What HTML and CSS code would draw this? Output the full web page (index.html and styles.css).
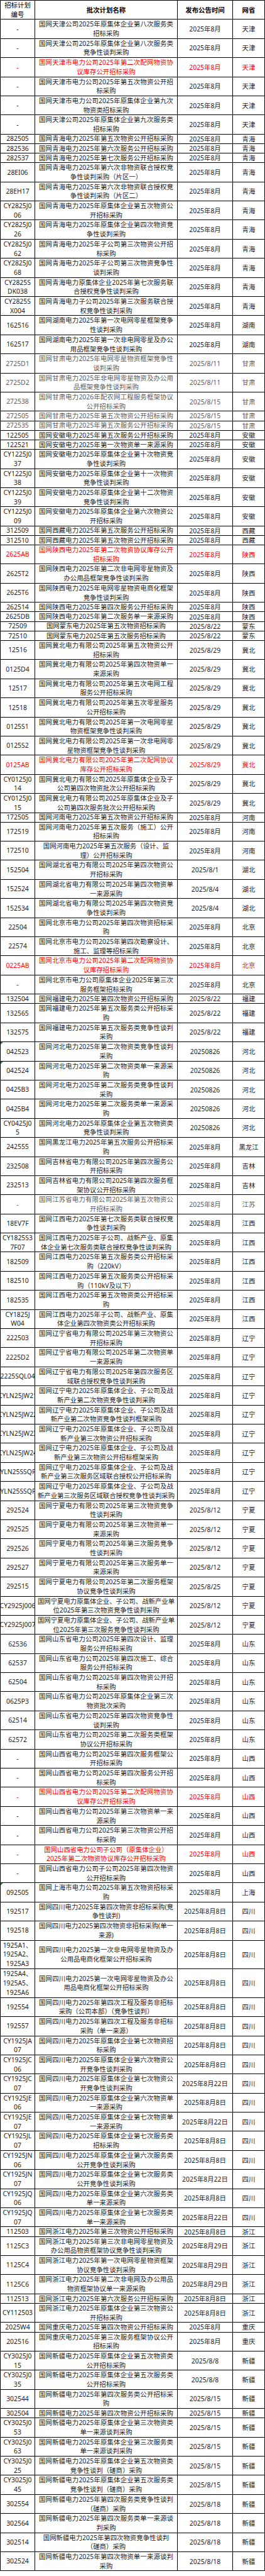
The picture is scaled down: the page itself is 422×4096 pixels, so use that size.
FILE: index.html
```html
<!DOCTYPE html>
<html lang="zh-CN">
<head>
<meta charset="utf-8">
<title>招标计划</title>
<link rel="stylesheet" href="styles.css">
</head>
<body>
<table class="sheet">
<colgroup><col class="c1"><col class="c2"><col class="c3"><col class="c4"></colgroup>
<thead>
<tr class="h2"><th class="nb"><div class="i"><span>招标计划</span><span>编号</span></div></th><th>批次计划名称</th><th>发布公告时间</th><th>网省</th></tr>
</thead>
<tbody>
<tr class="h2"><td><div class="i">-</div></td><td><div class="n"><span class="j">国网天津公司2025年原集体企业第八次服务类</span><span>招标采购</span></div></td><td>2025年8月</td><td>天津</td></tr>
<tr class="h2"><td><div class="i">-</div></td><td><div class="n"><span class="j">国网天津公司2025年原集体企业第八次服务类</span><span>竞争性谈判采购</span></div></td><td>2025年8月</td><td>天津</td></tr>
<tr class="h2 red"><td><div class="i">-</div></td><td><div class="n"><span class="j">国网天津市电力公司2025年第二次配网物资协</span><span>议库存公开招标采购</span></div></td><td>2025年8月</td><td>天津</td></tr>
<tr class="h2"><td><div class="i">-</div></td><td><div class="n"><span class="j">国网天津市电力公司2025年第五次物资公开招</span><span>标采购</span></div></td><td>2025年8月</td><td>天津</td></tr>
<tr class="h2"><td><div class="i">-</div></td><td><div class="n"><span class="j">国网天津市电力公司2025年原集体企业第九次</span><span>物资类招标采购</span></div></td><td>2025年8月</td><td>天津</td></tr>
<tr class="h2"><td><div class="i">-</div></td><td><div class="n"><span class="j">国网天津公司2025年原集体企业第九次服务类</span><span>招标采购</span></div></td><td>2025年8月</td><td>天津</td></tr>
<tr class="h1"><td><div class="i">282505</div></td><td><div class="n"><span class="j">国网青海电力2025年第五次物资公开招标采购</span></div></td><td>2025年8月</td><td>青海</td></tr>
<tr class="h1"><td><div class="i">282536</div></td><td><div class="n"><span class="j">国网青海电力2025年第六次服务公开招标采购</span></div></td><td>2025年8月</td><td>青海</td></tr>
<tr class="h1"><td><div class="i">282537</div></td><td><div class="n"><span class="j">国网青海电力2025年第七次服务公开招标采购</span></div></td><td>2025年8月</td><td>青海</td></tr>
<tr class="h2"><td><div class="i">28EI06</div></td><td><div class="n"><span class="j">国网青海电力2025年第六次非物资联合授权竞</span><span>争性谈判采购（片区一）</span></div></td><td>2025年8月</td><td>青海</td></tr>
<tr class="h2"><td><div class="i">28EH17</div></td><td><div class="n"><span class="j">国网青海电力2025年第六次非物资联合授权竞</span><span>争性谈判采购（片区二）</span></div></td><td>2025年8月</td><td>青海</td></tr>
<tr class="h2"><td><div class="i"><span>CY2825J0</span><span>06</span></div></td><td><div class="n"><span class="j">国网青海电力2025年原集体企业第五次物资公</span><span>开招标采购</span></div></td><td>2025年8月</td><td>青海</td></tr>
<tr class="h2"><td><div class="i"><span>CY2825J0</span><span>26</span></div></td><td><div class="n"><span class="j">国网青海电力2025年原集体企业第四次物资竞</span><span>争性谈判采购</span></div></td><td>2025年8月</td><td>青海</td></tr>
<tr class="h2"><td><div class="i"><span>CY2825J0</span><span>62</span></div></td><td><div class="n"><span class="j">国网青海电力2025年子公司第三次物资公开招</span><span>标采购</span></div></td><td>2025年8月</td><td>青海</td></tr>
<tr class="h2"><td><div class="i"><span>CY2825J0</span><span>68</span></div></td><td><div class="n"><span class="j">国网青海电力2025年子公司第三次物资竞争性</span><span>谈判采购</span></div></td><td>2025年8月</td><td>青海</td></tr>
<tr class="h2"><td><div class="i"><span>CY2825S</span><span>DK038</span></div></td><td><div class="n"><span class="j">国网青海电力原集体企业2025年第七次服务联</span><span>合授权竞争性谈判采购</span></div></td><td>2025年8月</td><td>青海</td></tr>
<tr class="h2"><td><div class="i"><span>CY2825S</span><span>X004</span></div></td><td><div class="n"><span class="j">国网青海电力子公司2025年第三次服务联合授</span><span>权竞争性谈判采购</span></div></td><td>2025年8月</td><td>青海</td></tr>
<tr class="h2"><td><div class="i">162516</div></td><td><div class="n"><span class="j">国网湖南电力2025年第一次电网零星框架竞争</span><span>性谈判采购</span></div></td><td>2025年8月</td><td>湖南</td></tr>
<tr class="h2"><td><div class="i">162517</div></td><td><div class="n"><span class="j">国网湖南电力2025年第一次非电网零星及办公</span><span>用品框架竞争性谈判采购</span></div></td><td>2025年8月</td><td>湖南</td></tr>
<tr class="h2 gray"><td><div class="i">2725D1</div></td><td><div class="n"><span class="j">国网甘肃电力2025年电网零星物资框架竞争性</span><span>谈判采购</span></div></td><td>2025/8/11</td><td>甘肃</td></tr>
<tr class="h2 gray"><td><div class="i">2725D2</div></td><td><div class="n"><span class="j">国网甘肃电力2025年非电网零星物资及办公用</span><span>品框架竞争性谈判采购</span></div></td><td>2025/8/11</td><td>甘肃</td></tr>
<tr class="h2 gray"><td><div class="i">272538</div></td><td><div class="n"><span class="j">国网甘肃电力2026年配农网工程服务框架协议</span><span>公开招标采购</span></div></td><td>2025/8/15</td><td>甘肃</td></tr>
<tr class="h1 gray"><td><div class="i">272505</div></td><td><div class="n"><span class="j">国网甘肃电力2025年第五次物资公开招标采购</span></div></td><td>2025/8/15</td><td>甘肃</td></tr>
<tr class="h1 gray"><td><div class="i">272535</div></td><td><div class="n"><span class="j">国网甘肃电力2025年第五次服务公开招标采购</span></div></td><td>2025/8/15</td><td>甘肃</td></tr>
<tr class="h1"><td><div class="i">122505</div></td><td><div class="n"><span class="j">国网安徽电力2025年第五次服务公开招标采购</span></div></td><td>2025年8月</td><td>安徽</td></tr>
<tr class="h1"><td><div class="i">122521</div></td><td><div class="n"><span class="j">国网安徽电力2025年第一次物资单一来源采购</span></div></td><td>2025年8月</td><td>安徽</td></tr>
<tr class="h2"><td><div class="i"><span>CY1225J0</span><span>37</span></div></td><td><div class="n"><span class="j">国网安徽电力2025年原集体企业第十次物资竞</span><span>争性谈判采购</span></div></td><td>2025年8月</td><td>安徽</td></tr>
<tr class="h2"><td><div class="i"><span>CY1225J0</span><span>38</span></div></td><td><div class="n"><span class="j">国网安徽电力2025年原集体企业第十一次物资</span><span>竞争性谈判采购</span></div></td><td>2025年8月</td><td>安徽</td></tr>
<tr class="h2"><td><div class="i"><span>CY1225J0</span><span>39</span></div></td><td><div class="n"><span class="j">国网安徽电力2025年原集体企业第十二次物资</span><span>竞争性谈判采购</span></div></td><td>2025年8月</td><td>安徽</td></tr>
<tr class="h2"><td><div class="i"><span>CY1225J0</span><span>09</span></div></td><td><div class="n"><span class="j">国网安徽电力2025年原集体企业第六次物资公</span><span>开招标采购</span></div></td><td>2025年8月</td><td>安徽</td></tr>
<tr class="h1"><td><div class="i">312509</div></td><td><div class="n"><span class="j">国网西藏电力2025年第五次服务公开招标采购</span></div></td><td>2025年8月</td><td>西藏</td></tr>
<tr class="h1"><td><div class="i">312510</div></td><td><div class="n"><span class="j">国网西藏电力2025年第五次物资公开招标采购</span></div></td><td>2025年8月</td><td>西藏</td></tr>
<tr class="h2 red"><td><div class="i">2625AB</div></td><td><div class="n"><span class="j">国网陕西电力2025年第二次物资协议库存公开</span><span>招标采购</span></div></td><td>2025年8月</td><td>陕西</td></tr>
<tr class="h2"><td><div class="i">2625T2</div></td><td><div class="n"><span class="j">国网陕西电力2025年第二次非电网零星物资及</span><span>办公用品框架竞争性谈判采购</span></div></td><td>2025年8月</td><td>陕西</td></tr>
<tr class="h2"><td><div class="i">2625T6</div></td><td><div class="n"><span class="j">国网陕西电力2025年电网零星物资电商化框架</span><span>竞争性谈判采购</span></div></td><td>2025年8月</td><td>陕西</td></tr>
<tr class="h1"><td><div class="i">262514</div></td><td><div class="n"><span class="j">国网陕西电力2025年第四次服务公开招标采购</span></div></td><td>2025年8月</td><td>陕西</td></tr>
<tr class="h1"><td><div class="i">2625DB</div></td><td><div class="n"><span class="j">国网陕西电力2025年第二次服务单一来源采购</span></div></td><td>2025年8月</td><td>陕西</td></tr>
<tr class="h1"><td><div class="i">72509</div></td><td><div class="n"><span>国网蒙东电力2025年第五次物资招标采购</span></div></td><td>2025/8/22</td><td>蒙东</td></tr>
<tr class="h1"><td><div class="i">72510</div></td><td><div class="n"><span>国网蒙东电力2025年第五次服务招标采购</span></div></td><td>2025/8/22</td><td>蒙东</td></tr>
<tr class="h2"><td><div class="i">12516</div></td><td><div class="n"><span class="j">国网冀北电力有限公司2025年第五次物资公开</span><span>招标采购</span></div></td><td>2025/8/29</td><td>冀北</td></tr>
<tr class="h2"><td><div class="i">0125D4</div></td><td><div class="n"><span class="j">国网冀北电力有限公司2025年第四次物资单一</span><span>来源采购</span></div></td><td>2025/8/29</td><td>冀北</td></tr>
<tr class="h2"><td><div class="i">12517</div></td><td><div class="n"><span class="j">国网冀北电力有限公司2025年第五次电网工程</span><span>服务公开招标采购</span></div></td><td>2025/8/29</td><td>冀北</td></tr>
<tr class="h2"><td><div class="i">12518</div></td><td><div class="n"><span class="j">国网冀北电力有限公司2025年第五次零星服务</span><span>公开招标采购</span></div></td><td>2025/8/29</td><td>冀北</td></tr>
<tr class="h2"><td><div class="i">0125S1</div></td><td><div class="n"><span class="j">国网冀北电力有限公司2025年第一次电网零星</span><span>物资框架竞争性谈判采购</span></div></td><td>2025/8/29</td><td>冀北</td></tr>
<tr class="h2"><td><div class="i">0125S2</div></td><td><div class="n"><span class="j">国网冀北电力有限公司2025年第一次非电网零</span><span>星物资框架竞争性谈判采购</span></div></td><td>2025/8/29</td><td>冀北</td></tr>
<tr class="h2 red"><td><div class="i">0125AB</div></td><td><div class="n"><span class="j">国网冀北电力有限公司2025年第二次配网协议</span><span>库存公开招标采购</span></div></td><td>2025/8/29</td><td>冀北</td></tr>
<tr class="h2"><td><div class="i"><span>CY0125J0</span><span>14</span></div></td><td><div class="n"><span class="j">国网冀北电力有限公司2025年原集体企业及子</span><span>公司第四次物资批次公开招标采购</span></div></td><td>2025/8/29</td><td>冀北</td></tr>
<tr class="h2"><td><div class="i"><span>CY0125J0</span><span>15</span></div></td><td><div class="n"><span class="j">国网冀北电力有限公司2025年原集体企业及子</span><span>公司第四次服务批次公开招标采购</span></div></td><td>2025/8/29</td><td>冀北</td></tr>
<tr class="h1"><td><div class="i">172505</div></td><td><div class="n"><span class="j">国网河南电力2025年第五次物资公开招标采购</span></div></td><td>2025年8月</td><td>河南</td></tr>
<tr class="h2"><td><div class="i">172519</div></td><td><div class="n"><span class="j">国网河南电力2025年第五次服务（施工）公开</span><span>招标采购</span></div></td><td>2025年8月</td><td>河南</td></tr>
<tr class="h2"><td><div class="i">172510</div></td><td><div class="n"><span>国网河南电力2025年第五次服务（设计、监</span><span>理）公开招标采购</span></div></td><td>2025年8月</td><td>河南</td></tr>
<tr class="h2"><td><div class="i">152504</div></td><td><div class="n"><span class="j">国网湖北省电力有限公司2025年第四次物资公</span><span>开招标采购</span></div></td><td>2025/8/1</td><td>湖北</td></tr>
<tr class="h2"><td><div class="i">152524</div></td><td><div class="n"><span class="j">国网湖北省电力有限公司2025年第四次物资单</span><span>一来源采购</span></div></td><td>2025/8/4</td><td>湖北</td></tr>
<tr class="h2"><td><div class="i">152534</div></td><td><div class="n"><span class="j">国网湖北省电力有限公司2025年第四次物资竞</span><span>争性谈判采购</span></div></td><td>2025/8/4</td><td>湖北</td></tr>
<tr class="h2"><td><div class="i">22504</div></td><td><div class="n"><span class="j">国网北京市电力公司2025年第四次物资招标采</span><span>购</span></div></td><td>2025年8月</td><td>北京</td></tr>
<tr class="h2"><td><div class="i">22574</div></td><td><div class="n"><span class="j">国网北京市电力公司2025年第四次勘察设计、</span><span>施工、监理等招标采购</span></div></td><td>2025年8月</td><td>北京</td></tr>
<tr class="h2 red"><td><div class="i">0225AB</div></td><td><div class="n"><span class="j">国网北京市电力公司2025年第二次配网物资协</span><span>议库存招标采购</span></div></td><td>2025年8月</td><td>北京</td></tr>
<tr class="h2"><td><div class="i">-</div></td><td><div class="n"><span class="j">国网北京市电力公司原集体企业2025年第三次</span><span>服务框架招标采购</span></div></td><td>2025年8月</td><td>北京</td></tr>
<tr class="h1"><td><div class="i">132504</div></td><td><div class="n"><span class="j">国网福建电力2025年第四次物资公开招标采购</span></div></td><td>2025/8/22</td><td>福建</td></tr>
<tr class="h2"><td><div class="i">132565</div></td><td><div class="n"><span class="j">国网福建电力2025年第五次服务类公开招标采</span><span>购</span></div></td><td>2025/8/22</td><td>福建</td></tr>
<tr class="h2"><td><div class="i">132575</div></td><td><div class="n"><span class="j">国网福建电力2025年第五次服务类竞争性谈判</span><span>采购</span></div></td><td>2025/8/22</td><td>福建</td></tr>
<tr class="h2"><td class="g"><div class="i">042523</div></td><td><div class="n"><span class="j">国网河北电力2025年第二次物资类竞争性谈判</span><span>采购</span></div></td><td>20250826</td><td>河北</td></tr>
<tr class="h2"><td class="g"><div class="i">042524</div></td><td><div class="n"><span class="j">国网河北电力2025年第二次物资类单一来源采</span><span>购</span></div></td><td>20250826</td><td>河北</td></tr>
<tr class="h2"><td><div class="i">0425B3</div></td><td><div class="n"><span class="j">国网河北电力2025年第二次服务类竞争性谈判</span><span>采购</span></div></td><td>20250826</td><td>河北</td></tr>
<tr class="h2"><td><div class="i">0425B4</div></td><td><div class="n"><span class="j">国网河北电力2025年第二次服务类单一来源采</span><span>购</span></div></td><td>20250826</td><td>河北</td></tr>
<tr class="h2"><td><div class="i"><span>CY0425J0</span><span>5</span></div></td><td><div class="n"><span class="j">国网河北电力2025年原集体企业第五次物资类</span><span>竞争性谈判采购</span></div></td><td>20250826</td><td>河北</td></tr>
<tr class="h2"><td><div class="i">242555</div></td><td><div class="n"><span class="j">国网黑龙江电力2025年第五次服务公开招标采</span><span>购</span></div></td><td>2025年8月</td><td>黑龙江</td></tr>
<tr class="h2"><td><div class="i">232508</div></td><td><div class="n"><span class="j">国网吉林省电力有限公司2025年第四次服务公</span><span>开招标采购</span></div></td><td>2025年8月</td><td>吉林</td></tr>
<tr class="h2"><td><div class="i">232513</div></td><td><div class="n"><span class="j">国网吉林省电力有限公司2025年第四次服务框</span><span>架协议公开招标采购</span></div></td><td>2025年8月</td><td>吉林</td></tr>
<tr class="h2 gray"><td><div class="i">-</div></td><td><div class="n"><span class="j">国网江苏省电力有限公司2025年第五次物资公</span><span>开招标采购</span></div></td><td>2025年8月</td><td>江苏</td></tr>
<tr class="h2"><td><div class="i">18EV7F</div></td><td><div class="n"><span class="j">国网江西电力2025年第七次服务类联合授权竞</span><span>争性谈判采购</span></div></td><td>2025年8月</td><td>江西</td></tr>
<tr class="h2"><td><div class="i"><span>CY1825S3</span><span>7F07</span></div></td><td><div class="n"><span class="j">国网江西电力2025年子公司、战新产业、原集</span><span>体企业第七次服务类联合授权竞争性谈判采购</span></div></td><td>2025年8月</td><td>江西</td></tr>
<tr class="h2"><td><div class="i">182509</div></td><td><div class="n"><span class="j">国网江西电力2025年第五次服务类公开招标采</span><span>购（220kV）</span></div></td><td>2025年8月</td><td>江西</td></tr>
<tr class="h2"><td><div class="i">182510</div></td><td><div class="n"><span class="j">国网江西电力2025年第五次服务类公开招标采</span><span>购（110kV及以下）</span></div></td><td>2025年8月</td><td>江西</td></tr>
<tr class="h2"><td><div class="i">182535</div></td><td><div class="n"><span class="j">国网江西电力2025年第五次物资类公开招标采</span><span>购</span></div></td><td>2025年8月</td><td>江西</td></tr>
<tr class="h2"><td><div class="i"><span>CY1825J</span><span>W04</span></div></td><td><div class="n"><span class="j">国网江西电力2025年子公司、战新产业、原集</span><span>体企业第四次物资类公开招标采购</span></div></td><td>2025年8月</td><td>江西</td></tr>
<tr class="h2"><td><div class="i">222503</div></td><td><div class="n"><span class="j">国网辽宁省电力有限公司2025年第三次物资公</span><span>开招标采购</span></div></td><td>2025年8月</td><td>辽宁</td></tr>
<tr class="h2"><td><div class="i">2225D2</div></td><td><div class="n"><span class="j">国网辽宁省电力有限公司2025年第二次物资单</span><span>一来源采购</span></div></td><td>2025年8月</td><td>辽宁</td></tr>
<tr class="h2"><td><div class="i">2225SQL04</div></td><td><div class="n"><span class="j">国网辽宁省电力有限公司2025年第四次服务区</span><span>域联合授权竞争性谈判采购</span></div></td><td>2025年8月</td><td>辽宁</td></tr>
<tr class="h2"><td><div class="i">CYLN25JW21</div></td><td><div class="n"><span class="j">国网辽宁电力2025年原集体企业、子公司及战</span><span>新产业第二次物资竞争性谈判采购</span></div></td><td>2025年8月</td><td>辽宁</td></tr>
<tr class="h2"><td><div class="i">CYLN25JW22</div></td><td><div class="n"><span class="j">国网辽宁电力2025年原集体企业、子公司及战</span><span>新产业第二次物资竞争性谈判框架采购</span></div></td><td>2025年8月</td><td>辽宁</td></tr>
<tr class="h2"><td><div class="i">CYLN25JW23</div></td><td><div class="n"><span class="j">国网辽宁电力2025年原集体企业、子公司及战</span><span>新产业第三次物资公开招标采购</span></div></td><td>2025年8月</td><td>辽宁</td></tr>
<tr class="h2"><td><div class="i">CYLN25JW24</div></td><td><div class="n"><span class="j">国网辽宁电力2025年原集体企业、子公司及战</span><span>新产业第三次物资公开招标框架采购</span></div></td><td>2025年8月</td><td>辽宁</td></tr>
<tr class="h2"><td><div class="i">CYLN25SSQF1</div></td><td><div class="n"><span class="j">国网辽宁电力2025年原集体企业、子公司及战</span><span>新产业第三次服务区域联合授权公开招标采购</span></div></td><td>2025年8月</td><td>辽宁</td></tr>
<tr class="h2"><td><div class="i">CYLN25SSQF2</div></td><td><div class="n"><span class="j">国网辽宁电力2025年原集体企业、子公司及战</span><span>新产业第三次服务区域联合授权竞争性谈判采购</span></div></td><td>2025年8月</td><td>辽宁</td></tr>
<tr class="h2"><td><div class="i">292524</div></td><td><div class="n"><span class="j">国网宁夏电力有限公司2025年第三次物资竞争</span><span>性谈判采购</span></div></td><td>2025/8/12</td><td>宁夏</td></tr>
<tr class="h2"><td><div class="i">292525</div></td><td><div class="n"><span class="j">国网宁夏电力有限公司2025年第三次物资单一</span><span>来源采购</span></div></td><td>2025/8/12</td><td>宁夏</td></tr>
<tr class="h2"><td><div class="i">292526</div></td><td><div class="n"><span class="j">国网宁夏电力有限公司2025年第三次服务竞争</span><span>性谈判采购</span></div></td><td>2025/8/12</td><td>宁夏</td></tr>
<tr class="h2"><td><div class="i">292527</div></td><td><div class="n"><span class="j">国网宁夏电力有限公司2025年第三次服务单一</span><span>来源采购</span></div></td><td>2025/8/12</td><td>宁夏</td></tr>
<tr class="h2"><td><div class="i">292515</div></td><td><div class="n"><span class="j">国网宁夏电力有限公司2025年第二次服务框架</span><span>协议竞争性谈判采购</span></div></td><td>2025/8/25</td><td>宁夏</td></tr>
<tr class="h2"><td><div class="i">CY2925J006</div></td><td><div class="n"><span>国网宁夏电力原集体企业、子公司、战新产业单</span><span>位2025年第三次物资竞争性谈判采购</span></div></td><td>2025/8/12</td><td>宁夏</td></tr>
<tr class="h2"><td><div class="i">CY2925J007</div></td><td><div class="n"><span>国网宁夏电力原集体企业、子公司、战新产业单</span><span>位2025年第三次服务竞争性谈判采购</span></div></td><td>2025/8/12</td><td>宁夏</td></tr>
<tr class="h2"><td><div class="i">62536</div></td><td><div class="n"><span class="j">国网山东省电力公司2025年第四次设计、监理</span><span>服务公开招标采购</span></div></td><td>2025年8月</td><td>山东</td></tr>
<tr class="h2"><td><div class="i">62537</div></td><td><div class="n"><span class="j">国网山东省电力公司2025年第四次施工、综合</span><span>服务公开招标采购</span></div></td><td>2025年8月</td><td>山东</td></tr>
<tr class="h2"><td><div class="i">62504</div></td><td><div class="n"><span class="j">国网山东省电力公司2025年第四次物资公开招</span><span>标采购</span></div></td><td>2025年8月</td><td>山东</td></tr>
<tr class="h2"><td><div class="i">0625P3</div></td><td><div class="n"><span class="j">国网山东省电力公司2025年原集体企业第三次</span><span>物资批次采购</span></div></td><td>2025年8月</td><td>山东</td></tr>
<tr class="h2"><td><div class="i">62514</div></td><td><div class="n"><span class="j">国网山东省电力公司2025年第四次物资竞争性</span><span>谈判采购</span></div></td><td>2025年8月</td><td>山东</td></tr>
<tr class="h2"><td><div class="i">62572</div></td><td><div class="n"><span class="j">国网山东省电力公司2025年第二次服务类框架</span><span>协议公开招标采购</span></div></td><td>2025年8月</td><td>山东</td></tr>
<tr class="h2"><td><div class="i">-</div></td><td><div class="n"><span class="j">国网山西省电力公司2025年第四次服务框架公</span><span>开招标采购</span></div></td><td>2025年8月</td><td>山西</td></tr>
<tr class="h2"><td><div class="i">-</div></td><td><div class="n"><span class="j">国网山西省电力公司2025年第四次服务公开招</span><span>标采购</span></div></td><td>2025年8月</td><td>山西</td></tr>
<tr class="h2 red"><td><div class="i">-</div></td><td><div class="n"><span class="j">国网山西省电力公司2025年第二次配网物资协</span><span>议库存公开招标采购</span></div></td><td>2025年8月</td><td>山西</td></tr>
<tr class="h2"><td><div class="i">-</div></td><td><div class="n"><span class="j">国网山西省电力公司2025年第三次物资单一来</span><span>源采购</span></div></td><td>2025年8月</td><td>山西</td></tr>
<tr class="h2"><td><div class="i">-</div></td><td><div class="n"><span class="j">国网山西省电力公司2025年第三次物资公开招</span><span>标采购</span></div></td><td>2025年8月</td><td>山西</td></tr>
<tr class="h2 red"><td><div class="i">-</div></td><td><div class="n"><span>国网山西省电力公司子公司（原集体企业）</span><span>2025年第二次物资协议库存公开招标采购</span></div></td><td>2025年8月</td><td>山西</td></tr>
<tr class="h2"><td><div class="i">-</div></td><td><div class="n"><span class="j">国网山西省电力公司子公司2025年第四次物资</span><span>公开招标采购</span></div></td><td>2025年8月</td><td>山西</td></tr>
<tr class="h2"><td class="g"><div class="i">092505</div></td><td><div class="n"><span class="j">国网上海市电力公司2025年第五次物资招标采</span><span>购</span></div></td><td>2025年8月</td><td>上海</td></tr>
<tr class="h2"><td><div class="i">192517</div></td><td><div class="n"><span class="j">国网四川电力2025年第四次物资非招标采购(竞</span><span>争性谈判)</span></div></td><td>2025年8月8日</td><td>四川</td></tr>
<tr class="h2"><td><div class="i">192518</div></td><td><div class="n"><span class="j">国网四川电力2025第四次物资非招标采购(单一</span><span>来源)</span></div></td><td>2025年8月8日</td><td>四川</td></tr>
<tr class="h3"><td><div class="i"><span>1925A1、</span><span>1925A2、</span><span>1925A3</span></div></td><td><div class="n"><span class="j">国网四川电力2025第一次非电网零星物资及办</span><span>公用品电商化框架公开招标采购</span></div></td><td>2025年8月8日</td><td>四川</td></tr>
<tr class="h3"><td><div class="i"><span>1925A4、</span><span>1925A5、</span><span>1925A6</span></div></td><td><div class="n"><span class="j">国网四川电力2025第一次电网零星物资及办公</span><span>用品电商化框架公开招标采购</span></div></td><td>2025年8月8日</td><td>四川</td></tr>
<tr class="h2"><td><div class="i">192554</div></td><td><div class="n"><span class="j">国网四川电力2025年第四次工程及服务非招标</span><span>采购（公司本部）（竞争性谈判）</span></div></td><td>2025年8月8日</td><td>四川</td></tr>
<tr class="h2"><td><div class="i">192557</div></td><td><div class="n"><span class="j">国网四川电力2025年第四次工程及服务非招标</span><span>采购（单一来源）</span></div></td><td>2025年8月8日</td><td>四川</td></tr>
<tr class="h2"><td><div class="i"><span>CY1925JA</span><span>07</span></div></td><td><div class="n"><span class="j">国网四川电力2025年原集体企业第七次物资招</span><span>标采购</span></div></td><td>2025年8月8日</td><td>四川</td></tr>
<tr class="h2"><td><div class="i"><span>CY1925JC</span><span>06</span></div></td><td><div class="n"><span class="j">国网四川电力2025年原集体企业第六次物资公</span><span>开竞争性谈判采购</span></div></td><td>2025年8月8日</td><td>四川</td></tr>
<tr class="h2"><td><div class="i"><span>CY1925JC</span><span>07</span></div></td><td><div class="n"><span class="j">国网四川电力2025年原集体企业第七次物资公</span><span>开竞争性谈判采购</span></div></td><td>2025年8月22日</td><td>四川</td></tr>
<tr class="h2"><td><div class="i"><span>CY1925JE</span><span>06</span></div></td><td><div class="n"><span class="j">国网四川电力2025年原集体企业第六次物资单</span><span>一来源采购</span></div></td><td>2025年8月8日</td><td>四川</td></tr>
<tr class="h2"><td><div class="i"><span>CY1925JE</span><span>07</span></div></td><td><div class="n"><span class="j">国网四川电力2025年原集体企业第七次物资单</span><span>一来源采购</span></div></td><td>2025年8月22日</td><td>四川</td></tr>
<tr class="h2"><td><div class="i"><span>CY1925JL</span><span>07</span></div></td><td><div class="n"><span class="j">国网四川电力2025年原集体企业第七次服务类</span><span>招标采购</span></div></td><td>2025年8月8日</td><td>四川</td></tr>
<tr class="h2"><td><div class="i"><span>CY1925JN</span><span>06</span></div></td><td><div class="n"><span class="j">国网四川电力2025年原集体企业第六次服务类</span><span>公开竞争性谈判采购</span></div></td><td>2025年8月8日</td><td>四川</td></tr>
<tr class="h2"><td><div class="i"><span>CY1925JN</span><span>07</span></div></td><td><div class="n"><span class="j">国网四川电力2025年原集体企业第七次服务类</span><span>公开竞争性谈判采购</span></div></td><td>2025年8月22日</td><td>四川</td></tr>
<tr class="h2"><td><div class="i"><span>CY1925JQ</span><span>06</span></div></td><td><div class="n"><span class="j">国网四川电力2025年原集体企业第六次服务类</span><span>单一来源采购</span></div></td><td>2025年8月8日</td><td>四川</td></tr>
<tr class="h2"><td><div class="i"><span>CY1925JQ</span><span>07</span></div></td><td><div class="n"><span class="j">国网四川电力2025年原集体企业第七次服务类</span><span>单一来源采购</span></div></td><td>2025年8月22日</td><td>四川</td></tr>
<tr class="h1"><td><div class="i">112503</div></td><td><div class="n"><span class="j">国网浙江电力2025年第三次物资公开招标采购</span></div></td><td>2025年8月8日</td><td>浙江</td></tr>
<tr class="h2"><td><div class="i">1125C3</div></td><td><div class="n"><span class="j">国网浙江电力2025年第三次非电网零星物资及</span><span>办公用品物资框架协议竞争性谈判采购</span></div></td><td>2025年8月29日</td><td>浙江</td></tr>
<tr class="h2"><td><div class="i">1125C4</div></td><td><div class="n"><span class="j">国网浙江电力2025年第一次电网零星物资框架</span><span>协议竞争性谈判采购</span></div></td><td>2025年8月29日</td><td>浙江</td></tr>
<tr class="h2"><td><div class="i">1125C6</div></td><td><div class="n"><span class="j">国网浙江电力2025年第二次非电网及办公用品</span><span>物资框架协议单一来源采购</span></div></td><td>2025年8月29日</td><td>浙江</td></tr>
<tr class="h1"><td><div class="i">112513</div></td><td><div class="n"><span class="j">国网浙江电力2025年第六次服务公开招标采购</span></div></td><td>2025年8月8日</td><td>浙江</td></tr>
<tr class="h2"><td><div class="i">CY112503</div></td><td><div class="n"><span class="j">国网浙江电力2025年原集体企业第三次物资公</span><span>开招标采购</span></div></td><td>2025年8月8日</td><td>浙江</td></tr>
<tr class="h1"><td><div class="i">2025W4</div></td><td><div class="n"><span class="j">国网重庆电力2025年第四次物资公开招标采购</span></div></td><td>2025年8月</td><td>重庆</td></tr>
<tr class="h2"><td><div class="i">202516</div></td><td><div class="n"><span class="j">国网重庆电力2025年第三次服务框架协议公开</span><span>招标采购</span></div></td><td>2025年8月</td><td>重庆</td></tr>
<tr class="h2"><td><div class="i"><span>CY3025J0</span><span>15</span></div></td><td><div class="n"><span class="j">国网新疆电力2025年原集体企业第五次物资类</span><span>公开招标采购</span></div></td><td>2025/8/8</td><td>新疆</td></tr>
<tr class="h2"><td><div class="i"><span>CY3025J0</span><span>35</span></div></td><td><div class="n"><span class="j">国网新疆电力2025年原集体企业第五次服务类</span><span>公开招标采购</span></div></td><td>2025/8/8</td><td>新疆</td></tr>
<tr class="h2"><td><div class="i">302544</div></td><td><div class="n"><span class="j">国网新疆电力2025年第四次服务类公开招标采</span><span>购</span></div></td><td>2025/8/15</td><td>新疆</td></tr>
<tr class="h1"><td><div class="i">302504</div></td><td><div class="n"><span class="j">国网新疆电力2025年第四次物资公开招标采购</span></div></td><td>2025/8/15</td><td>新疆</td></tr>
<tr class="h2"><td><div class="i"><span>CY3025J0</span><span>53</span></div></td><td><div class="n"><span class="j">国网新疆电力2025年原集体企业第三次物资类</span><span>单一来源谈判采购</span></div></td><td>2025/8/15</td><td>新疆</td></tr>
<tr class="h2"><td><div class="i"><span>CY3025J0</span><span>63</span></div></td><td><div class="n"><span class="j">国网新疆电力2025年原集体企业第三次服务类</span><span>单一来源谈判采购</span></div></td><td>2025/8/15</td><td>新疆</td></tr>
<tr class="h2"><td><div class="i"><span>CY3025J0</span><span>25</span></div></td><td><div class="n"><span class="j">国网新疆电力2025年原集体企业第五次物资类</span><span>竞争性谈判（磋商）采购</span></div></td><td>2025/8/15</td><td>新疆</td></tr>
<tr class="h2"><td><div class="i"><span>CY3025J0</span><span>45</span></div></td><td><div class="n"><span class="j">国网新疆电力2025年原集体企业第五次服务类</span><span>竞争性谈判（磋商）采购</span></div></td><td>2025/8/15</td><td>新疆</td></tr>
<tr class="h2"><td><div class="i">302554</div></td><td><div class="n"><span class="j">国网新疆电力2025年第四次服务类竞争性谈判</span><span>（磋商）采购</span></div></td><td>2025/8/18</td><td>新疆</td></tr>
<tr class="h2"><td><div class="i">302564</div></td><td><div class="n"><span class="j">国网新疆电力2025年第四次服务类单一来源谈</span><span>判采购</span></div></td><td>2025/8/18</td><td>新疆</td></tr>
<tr class="h2"><td><div class="i">302514</div></td><td><div class="n"><span>国网新疆电力2025年第四次物资竞争性谈判</span><span>（磋商）采购</span></div></td><td>2025/8/18</td><td>新疆</td></tr>
<tr class="h2"><td><div class="i">302524</div></td><td><div class="n"><span class="j">国网新疆电力2025年第四次物资单一来源谈判</span><span>采购</span></div></td><td>2025/8/18</td><td>新疆</td></tr>
</tbody>
</table>
</body>
</html>
```

FILE: styles.css
```css
html, body {
  margin: 0;
  padding: 0;
  background: #ffffff;
}

body {
  font-family: "Noto Sans", "Noto Sans CJK SC", sans-serif;
  color: #222222;
}

.sheet {
  border-collapse: collapse;
  table-layout: fixed;
  width: 421px;
}

.c1 { width: 55px; }
.c2 { width: 227px; }
.c3 { width: 88px; }
.c4 { width: 51px; }

.sheet th,
.sheet td {
  border: 1px solid #000000;
  padding: 0;
  text-align: center;
  vertical-align: middle;
  font-size: 10.4px;
  line-height: 14px;
  white-space: nowrap;
}

.sheet th {
  font-weight: bold;
  color: #000000;
}

.sheet th.nb {
  font-weight: normal;
}

tr.h1 { height: 15.2px; }
tr.h2 { height: 30.4px; }
tr.h3 { height: 45.6px; }

.n,
.i {
  display: flex;
  flex-direction: column;
  justify-content: center;
  align-items: center;
  line-height: 14.7px;
}

.h1 .n, .h1 .i { height: 14.2px; }
.h2 .n, .h2 .i { height: 29.4px; }
.h3 .n, .h3 .i { height: 44.6px; }

.i {
  overflow: hidden;
}

.i span,
.n span {
  display: block;
  white-space: nowrap;
}

.n {
  padding: 0 6px;
}

.n .j {
  align-self: stretch;
  white-space: normal;
  text-align: justify;
  text-align-last: justify;
}

tr.red td {
  color: #ff0000;
}

tr.gray td {
  color: #5c5c5c;
}

td.g {
  position: relative;
}

td.g::before {
  content: "";
  position: absolute;
  left: 0;
  top: 0;
  width: 0;
  height: 0;
  border-top: 4px solid #1f8f3a;
  border-right: 4px solid transparent;
}
```
